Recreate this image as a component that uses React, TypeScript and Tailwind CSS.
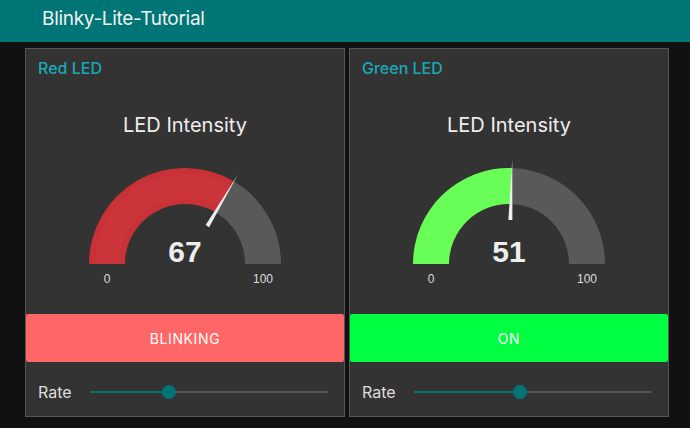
import React from "react";

const CX = 110;
const CY = 108;
const R_OUT = 96;
const R_IN = 60;

function pt(r: number, f: number) {
  const a = Math.PI * (1 - f);
  return [CX + r * Math.cos(a), CY - r * Math.sin(a)];
}

function band(f0: number, f1: number, ro = R_OUT, ri = R_IN) {
  const [x0, y0] = pt(ro, f0);
  const [x1, y1] = pt(ro, f1);
  const [x2, y2] = pt(ri, f1);
  const [x3, y3] = pt(ri, f0);
  return `M${x0} ${y0} A${ro} ${ro} 0 0 1 ${x1} ${y1} L${x2} ${y2} A${ri} ${ri} 0 0 0 ${x3} ${y3} Z`;
}

function needle(f: number) {
  const a = Math.PI * (1 - f);
  const [bx, by] = pt(44, f);
  const [tx, ty] = pt(104, f);
  const nx = Math.sin(a) * 2;
  const ny = Math.cos(a) * 2;
  return `${bx - nx},${by - ny} ${bx + nx},${by + ny} ${tx},${ty}`;
}

function Gauge({ value, color, glow }: { value: number; color: string; glow: string }) {
  const f = value / 100;
  return (
    <svg width="220" height="130" viewBox="0 0 220 130" className="block mx-auto">
      <path d={band(0, f)} fill={color} />
      <path d={band(0, f, 90, 66)} fill={glow} />
      <path d={band(f, 1)} fill="#595959" />
      <polygon points={needle(f)} fill="#eeeeee" />
      <text
        x={CX}
        y={106}
        textAnchor="middle"
        fill="#eeeeee"
        fontSize="30"
        fontWeight="bold"
        fontFamily="'Liberation Sans', Arial, sans-serif"
      >
        {value}
      </text>
      <text x={CX - 78} y={127} textAnchor="middle" fill="#dddddd" fontSize="12" fontFamily="'Liberation Sans', Arial, sans-serif">
        0
      </text>
      <text x={CX + 78} y={127} textAnchor="middle" fill="#dddddd" fontSize="12" fontFamily="'Liberation Sans', Arial, sans-serif">
        100
      </text>
    </svg>
  );
}

function LedCard({
  title,
  value,
  arc,
  glow,
  button,
  buttonBg,
  rate,
}: {
  title: string;
  value: number;
  arc: string;
  glow: string;
  button: string;
  buttonBg: string;
  rate: number;
}) {
  return (
    <div className="w-[320px] h-[369px] border border-[#555555] bg-[#333333] flex flex-col">
      <div className="h-[37px] flex items-center pl-3 text-[16px] font-medium text-[#18a9b7]">{title}</div>
      <div className="h-[70px] pt-[7px] flex items-center justify-center text-[20px] text-[#eeeeee]">
        LED Intensity
      </div>
      <Gauge value={value} color={arc} glow={glow} />
      <button
        type="button"
        className={`mt-[28px] h-[48px] w-full rounded-[2px] text-[14px] tracking-[0.6px] text-white ${buttonBg}`}
      >
        {button}
      </button>
      <div className="h-[54px] pt-[6px] flex items-center pl-3 pr-4">
        <span className="w-[52px] text-[16px] text-[#dddddd]">Rate</span>
        <div className="relative flex-1 h-[2px] bg-[#555555]">
          <div className="absolute left-0 top-0 h-[2px] bg-[#007575]" style={{ width: `${rate}%` }} />
          <div
            className="absolute top-[-6px] w-[14px] h-[14px] rounded-full bg-[#007575] -translate-x-1/2"
            style={{ left: `${rate}%` }}
          />
        </div>
      </div>
    </div>
  );
}

export default function App() {
  return (
    <div className="w-[690px] h-[428px] bg-[#111111] overflow-hidden" style={{ fontFamily: "Inter, 'Noto Sans', sans-serif" }}>
      <header className="h-[42px] bg-[#007576] flex items-center pl-[42px] pb-[3px] text-[19px] tracking-[-0.3px] text-[#f0f0f0]">
        Blinky-Lite-Tutorial
      </header>
      <main className="flex gap-[4px] pl-[25px] pt-[6px]">
        <LedCard title="Red LED" value={67} arc="#c83236" glow="#cb3539" button="BLINKING" buttonBg="bg-[#ff6666]" rate={33} />
        <LedCard title="Green LED" value={51} arc="#69fe57" glow="#69fe57" button="ON" buttonBg="bg-[#00ff41]" rate={44.5} />
      </main>
    </div>
  );
}
